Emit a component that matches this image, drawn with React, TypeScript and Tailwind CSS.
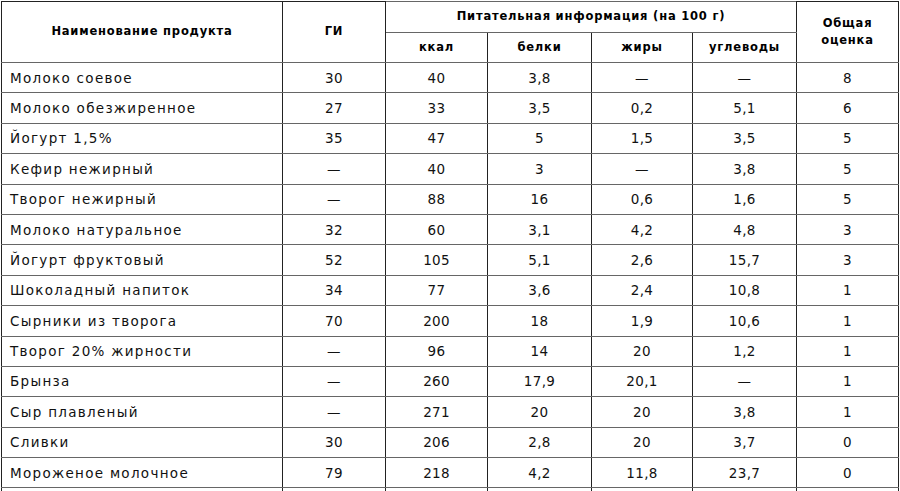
const rows: string[][] = [
  ["Молоко соевое", "30", "40", "3,8", "—", "—", "8"],
  ["Молоко обезжиренное", "27", "33", "3,5", "0,2", "5,1", "6"],
  ["Йогурт 1,5%", "35", "47", "5", "1,5", "3,5", "5"],
  ["Кефир нежирный", "—", "40", "3", "—", "3,8", "5"],
  ["Творог нежирный", "—", "88", "16", "0,6", "1,6", "5"],
  ["Молоко натуральное", "32", "60", "3,1", "4,2", "4,8", "3"],
  ["Йогурт фруктовый", "52", "105", "5,1", "2,6", "15,7", "3"],
  ["Шоколадный напиток", "34", "77", "3,6", "2,4", "10,8", "1"],
  ["Сырники из творога", "70", "200", "18", "1,9", "10,6", "1"],
  ["Творог 20% жирности", "—", "96", "14", "20", "1,2", "1"],
  ["Брынза", "—", "260", "17,9", "20,1", "—", "1"],
  ["Сыр плавленый", "—", "271", "20", "20", "3,8", "1"],
  ["Сливки", "30", "206", "2,8", "20", "3,7", "0"],
  ["Мороженое молочное", "79", "218", "4,2", "11,8", "23,7", "0"],
];

const cell = "border-x border-x-[#222] border-y border-y-[#666] p-0";

export default function App() {
  return (
    <div className="w-[900px] h-[491px] overflow-hidden bg-white pl-[1px] pt-[1px]">
      <table
        className="table-fixed border-collapse text-[#111] w-[897px]"
        style={{ fontFamily: '"DejaVu Sans", "Liberation Sans", sans-serif' }}
      >
        <colgroup>
          <col className="w-[281px]" />
          <col className="w-[103px]" />
          <col className="w-[102px]" />
          <col className="w-[104px]" />
          <col className="w-[101px]" />
          <col className="w-[104px]" />
          <col className="w-[102px]" />
        </colgroup>
        <thead className="text-[11.5px] font-bold tracking-[0.8px] text-black">
          <tr className="h-[31px]">
            <th rowSpan={2} className={`${cell} border-t-[#222] text-center align-middle`}>
              Наименование продукта
            </th>
            <th rowSpan={2} className={`${cell} border-t-[#222] text-center align-middle`}>
              ГИ
            </th>
            <th colSpan={4} className={`${cell} border-y-[#222] text-center align-middle`}>
              Питательная информация (на 100 г)
            </th>
            <th rowSpan={2} className={`${cell} border-t-[#222] text-center align-middle leading-[17px]`}>
              Общая
              <br />
              оценка
            </th>
          </tr>
          <tr className="h-[30px]">
            <th className={`${cell} text-center`}>ккал</th>
            <th className={`${cell} text-center`}>белки</th>
            <th className={`${cell} text-center`}>жиры</th>
            <th className={`${cell} text-center`}>углеводы</th>
          </tr>
        </thead>
        <tbody className="text-[13.5px]">
          {rows.map((r) => (
            <tr key={r[0]} className="h-[30.4px]">
              {r.map((v, i) => (
                <td
                  key={i}
                  className={`${cell} ${i === 0 ? "text-left pl-[8px] tracking-[1.3px]" : "text-center tracking-[0.3px]"}`}
                >
                  {v}
                </td>
              ))}
            </tr>
          ))}
          <tr className="h-[30px]">
            {rows[0].map((_, i) => (
              <td key={i} className={cell}></td>
            ))}
          </tr>
        </tbody>
      </table>
    </div>
  );
}
